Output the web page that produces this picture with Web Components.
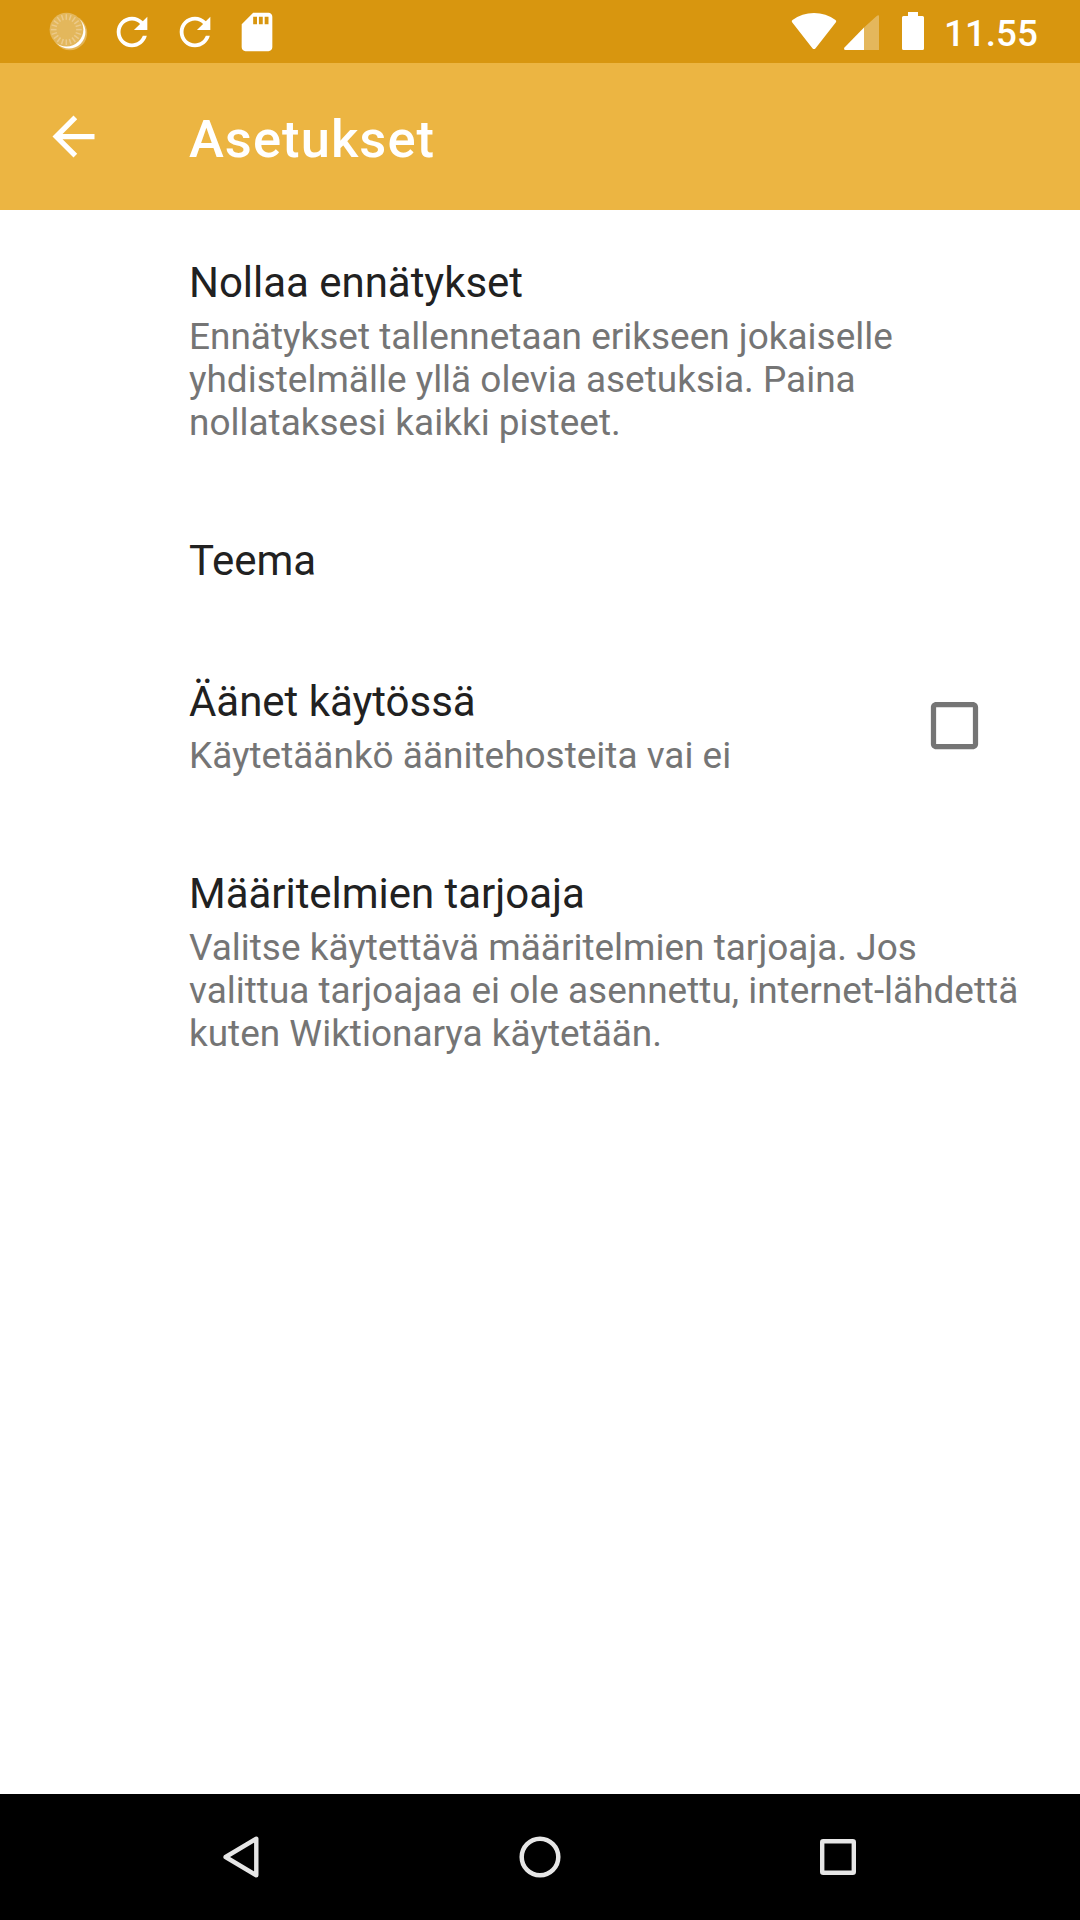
<!DOCTYPE html>
<html lang="fi">
<head>
<meta charset="utf-8">
<title>Asetukset</title>
<style>
html, body { margin: 0; height: 100%; }
body { font-family: Roboto, sans-serif; background: #fff; }
</style>
</head>
<body>
<settings-screen></settings-screen>
<script>
const define = (name, html) => {
  const tpl = document.createElement('template');
  tpl.innerHTML = html;
  customElements.define(name, class extends HTMLElement {
    constructor() {
      super();
      this.attachShadow({ mode: 'open' }).append(tpl.content.cloneNode(true));
    }
  });
};

const ICONS = {
  progress: ['0 0 46 46', () => {
    let ticks = '';
    for (let i = 0; i < 20; i++)
      ticks += `<path d="M20.3 5.200v5.600" transform="rotate(${i * 18} 20.3 20.6)" stroke="#ecca8a" stroke-width="1.500" fill="none"/>`;
    return `<circle cx="23.800" cy="23.800" r="17.400" fill="#fff" opacity=".3"/>
      <circle cx="22.900" cy="23" r="16.600" fill="#fff"/>
      <circle cx="20.500" cy="20.600" r="16.900" fill="#e3b75c"/>${ticks}`;
  }],
  refresh: ['0 0 24 24', () => '<path d="M17.65 6.35C16.2 4.9 14.21 4 12 4c-4.42 0-7.99 3.58-7.99 8s3.57 8 7.99 8c3.73 0 6.84-2.55 7.73-6h-2.08c-.82 2.33-3.04 4-5.65 4-3.31 0-6-2.69-6-6s2.69-6 6-6c1.66 0 3.14.69 4.22 1.78L13 11h7V4l-2.35 2.35z"/>'],
  sd: ['0 0 24 24', () => '<path d="M18 2h-8L4.02 8 4 20c0 1.1.9 2 2 2h12c1.1 0 2-.9 2-2V4c0-1.1-.9-2-2-2zm-6 6h-2V4h2v4zm3 0h-2V4h2v4zm3 0h-2V4h2v4z"/>'],
  wifi: ['0 0 46 38', () => '<path d="M1.100 10.300Q.1 9 1.500 8Q11 1 23 1T44.500 8Q45.900 9 44.900 10.300L24.600 36.200Q23 38 21.400 36.200Z"/>'],
  cell: ['0 0 35 35', () => '<path d="M20 12.500L33 .8Q35-.8 35 1.500V35H20Z" opacity=".32"/><path d="M20 12.500V35H1.500Q-.8 34.800.5 32.500Z"/>'],
  battery: ['0 0 22 38', () => '<path d="M6 0H16V4H20.500Q22 4 22 5.500V36.500Q22 38 20.500 38H1.500Q0 38 0 36.500V5.500Q0 4 1.500 4H6Z"/>'],
  back: ['0 0 24 24', () => '<path d="M20 11H7.830l5.590-5.590L12 4l-8 8 8 8 1.410-1.410L7.830 13H20v-2z"/>'],
  checkbox: ['0 0 24 24', () => '<path d="M19 5v14H5V5h14m0-2H5c-1.100 0-2 .9-2 2v14c0 1.100.9 2 2 2h14c1.100 0 2-.9 2-2V5c0-1.100-.9-2-2-2z"/>'],
  navBack: ['0 0 60 60', () => '<path d="M13.600 30L44.300 11.700V48.300Z" fill="none" stroke="currentColor" stroke-width="4.400" stroke-linejoin="round"/>'],
  navHome: ['0 0 60 60', () => '<circle cx="30" cy="30" r="18.300" fill="none" stroke="currentColor" stroke-width="4.500"/>'],
  navRecent: ['0 0 60 60', () => '<rect x="14.200" y="14.200" width="31.600" height="31.600" rx="1" fill="none" stroke="currentColor" stroke-width="4.400"/>']
};

customElements.define('ui-icon', class extends HTMLElement {
  connectedCallback() {
    if (this.shadowRoot) return;
    const [box, draw] = ICONS[this.getAttribute('name')];
    this.attachShadow({ mode: 'open' }).innerHTML = `
      <style>
        :host { display: block; flex: none; }
        svg { display: block; width: 100%; height: 100%; fill: currentColor; overflow: visible; }
      </style>
      <svg viewBox="${box}" aria-hidden="true">${draw()}</svg>`;
  }
});

define('status-bar', `
  <style>
    :host { display: flex; justify-content: space-between; height: 63px; box-sizing: border-box;
      padding: 0 43px 0 46px; background: #d8960f; color: #fff; }
    .notes { display: flex; gap: 16.800px; padding-top: 8.500px; }
    .notes ui-icon { width: 46px; height: 46px; }
    .system { display: flex; align-items: flex-start; }
    .wifi { width: 46px; height: 38px; margin: 12px 7px 0 0; }
    .cell { width: 35px; height: 35px; margin: 15px 23px 0 0; }
    .battery { width: 22px; height: 38px; margin: 12px 20px 0 0; }
    time { font-size: 36.800px; line-height: 43px; font-weight: 500; margin-top: 12px; width: 93px; white-space: nowrap; }
  </style>
  <div class="notes">
    <ui-icon name="progress"></ui-icon><ui-icon name="refresh"></ui-icon>
    <ui-icon name="refresh"></ui-icon><ui-icon name="sd"></ui-icon>
  </div>
  <div class="system">
    <ui-icon class="wifi" name="wifi"></ui-icon>
    <ui-icon class="cell" name="cell"></ui-icon>
    <ui-icon class="battery" name="battery"></ui-icon>
    <time>11.55</time>
  </div>`);

define('app-bar', `
  <style>
    :host { display: flex; align-items: center; height: 147px; box-sizing: border-box;
      padding-left: 42px; background: #ecb542; color: #fff; }
    ui-icon { width: 63px; height: 63px; margin-right: 84px; }
    h1 { margin: 0; padding-top: 4px; font-size: 52.500px; line-height: 62px; font-weight: 500; letter-spacing: .02em; }
  </style>
  <ui-icon name="back"></ui-icon><h1><slot></slot></h1>`);

define('preference-item', `
  <style>
    :host { display: flex; align-items: center; padding: 42px 42px 42px 189px; }
    .text { flex: 1; min-width: 0; }
    .title { padding: 6px 0 2px; font-size: 42px; line-height: 49px; letter-spacing: -.03px; color: #212121; }
    ::slotted([slot=summary]) { display: block; padding: 6px 0 2px; font-size: 36.960px;
      line-height: 43px; color: #757575; white-space: nowrap; }
    ::slotted([slot=widget]) { width: 63px; height: 63px; margin-right: 52.500px; color: #757575; }
  </style>
  <div class="text"><div class="title"><slot></slot></div><slot name="summary"></slot></div>
  <slot name="widget"></slot>`);

define('nav-bar', `
  <style>
    :host { display: flex; justify-content: center; align-items: center; gap: 238px;
      height: 126px; background: #000; color: #e6e6e6; }
    ui-icon { width: 60px; height: 60px; }
  </style>
  <ui-icon name="navBack"></ui-icon><ui-icon name="navHome"></ui-icon><ui-icon name="navRecent"></ui-icon>`);

define('settings-screen', `
  <style>
    :host { display: flex; flex-direction: column; width: 1080px; height: 1920px; background: #fff; }
    main { flex: 1; }
  </style>
  <status-bar></status-bar>
  <app-bar>Asetukset</app-bar>
  <main>
    <preference-item>Nollaa ennätykset
      <span slot="summary">Ennätykset tallennetaan erikseen jokaiselle<br>yhdistelmälle yllä olevia asetuksia. Paina<br>nollataksesi kaikki pisteet.</span>
    </preference-item>
    <preference-item>Teema</preference-item>
    <preference-item>Äänet käytössä
      <span slot="summary">Käytetäänkö äänitehosteita vai ei</span>
      <ui-icon slot="widget" name="checkbox"></ui-icon>
    </preference-item>
    <preference-item>Määritelmien tarjoaja
      <span slot="summary">Valitse käytettävä määritelmien tarjoaja. Jos<br>valittua tarjoajaa ei ole asennettu, internet-lähdettä<br>kuten Wiktionarya käytetään.</span>
    </preference-item>
  </main>
  <nav-bar></nav-bar>`);
</script>
</body>
</html>
